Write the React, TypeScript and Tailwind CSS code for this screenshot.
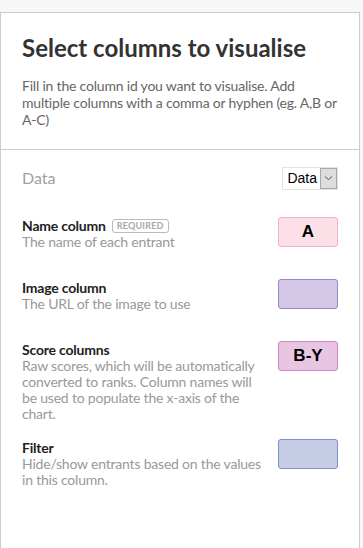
import React from 'react';

type Field = {
  label: string;
  hint: string;
  value: string;
  required?: boolean;
  box: string;
};

const fields: Field[] = [
  { label: 'Name column', hint: 'The name of each entrant', value: 'A', required: true, box: 'bg-[#fde0e7] border-[#f4b3c6]' },
  { label: 'Image column', hint: 'The URL of the image to use', value: '', box: 'bg-[#d3c6e6] border-[#9d84cb]' },
  {
    label: 'Score columns',
    hint: 'Raw scores, which will be automatically converted to ranks. Column names will be used to populate the x-axis of the chart.',
    value: 'B-Y',
    box: 'bg-[#e8c6e3] border-[#cf86c3]',
  },
  { label: 'Filter', hint: 'Hide/show entrants based on the values in this column.', value: '', box: 'bg-[#c6cce6] border-[#7f8fcb]' },
];

const App: React.FC = () => {
  return (
    <div className="min-h-[548px] bg-[#f7f7f7] pt-[12px] font-['Lato',sans-serif]">
      <div className="w-[360px] min-h-[536px] bg-white border border-b-0 border-[#cccccc]">
        {/* Header */}
        <div className="px-[21px] pt-[20px] pb-[21px] border-b border-[#cccccc]">
          <h1 className="text-[24px] leading-[30px] font-bold text-[#333333]">
            Select columns to visualise
          </h1>
          <p className="mt-[14px] text-[14px] leading-[17px] text-[#666666] tracking-[-0.2px]">
            Fill in the column id you want to visualise. Add multiple columns with a comma or hyphen (eg. A,B or A-C)
          </p>
        </div>

        {/* Data section */}
        <div className="px-[21px] pt-[16px]">
          <div className="flex items-center justify-between">
            <h2 className="text-[16px] text-[#a0a0a0]">Data</h2>
            <div className="flex items-center h-[23px] border border-[#e2e2e2] bg-white pl-[4px] font-['Liberation_Sans',sans-serif] text-[14px] text-black">
              <span className="pr-[3px]">Data</span>
              <span className="flex items-center justify-center w-[17px] h-[21px] bg-[#dddddd] border border-[#a9a9a9]">
                <svg width="9" height="6" viewBox="0 0 9 6" fill="none">
                  <path d="M1 1.5l3.5 3 3.5-3" stroke="#555" strokeWidth="1" />
                </svg>
              </span>
            </div>
          </div>

          <div className="mt-[27px] flex flex-col gap-[17px]">
            {fields.map((f) => (
              <div key={f.label} className="flex items-start justify-between min-h-[45px]">
                <div className="w-[243px] tracking-[-0.2px]">
                  <div className="flex items-center gap-[6px]">
                    <span className="text-[14px] leading-[17px] font-bold text-[#222222]">{f.label}</span>
                    {f.required && (
                      <span className="border border-[#bbbbbb] rounded-[3px] px-[4px] text-[9px] leading-[12px] font-bold text-[#aaaaaa] tracking-[0.2px]">
                        REQUIRED
                      </span>
                    )}
                  </div>
                  <p className="text-[14px] leading-[16px] text-[#999999]">{f.hint}</p>
                </div>
                <div
                  className={`w-[60px] h-[30px] rounded-[3px] border flex items-center justify-center font-['Liberation_Sans',sans-serif] font-bold text-[17px] text-black ${f.box}`}
                >
                  {f.value}
                </div>
              </div>
            ))}
          </div>
        </div>
      </div>
    </div>
  );
};

export default App;
